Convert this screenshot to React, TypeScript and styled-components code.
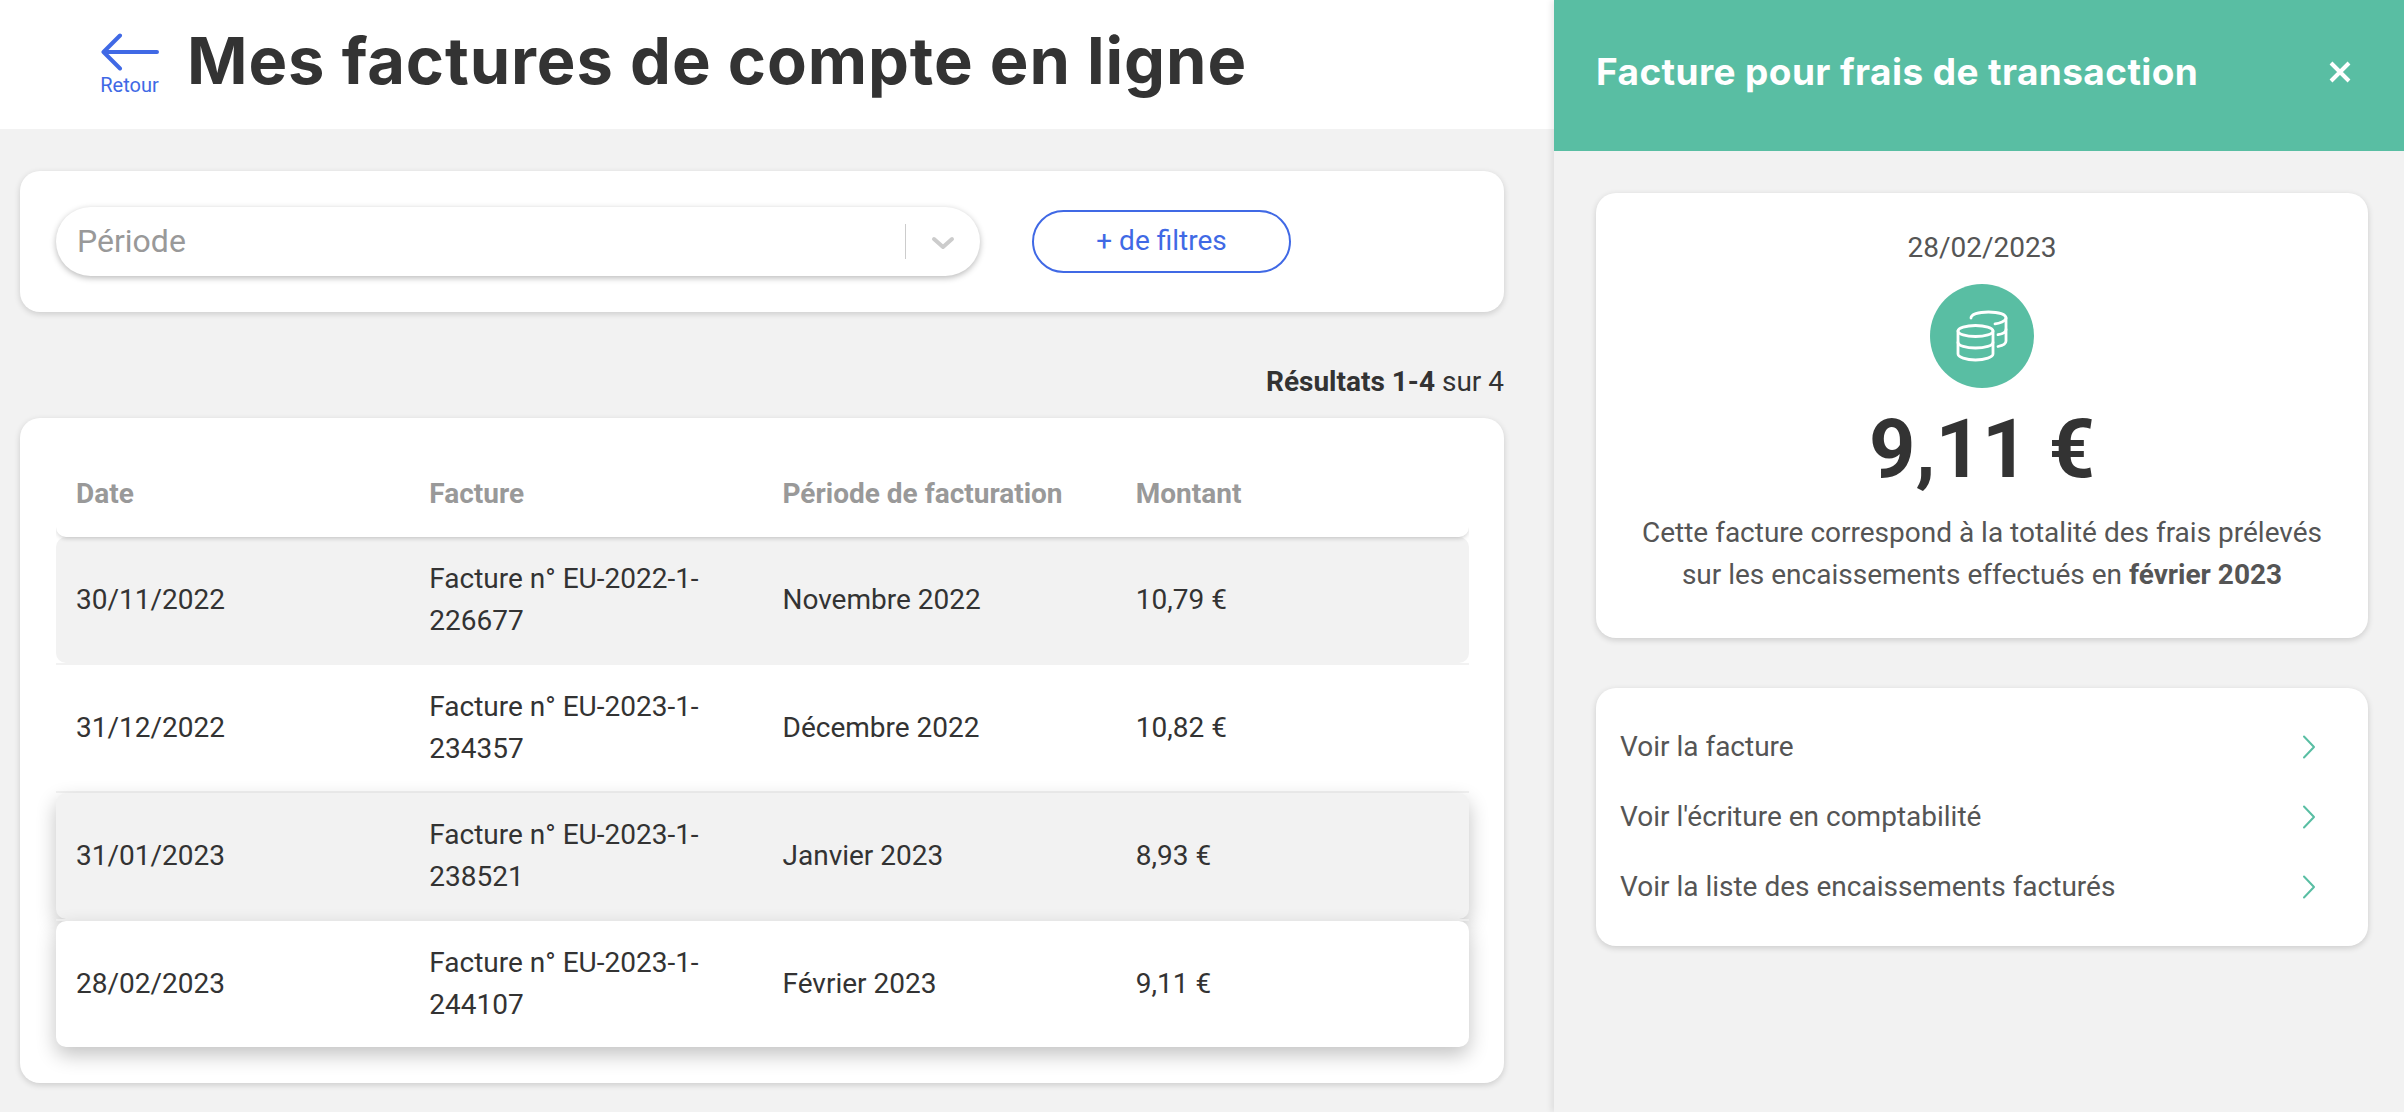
import React from "react";
import styled, { createGlobalStyle } from "styled-components";

const Global = createGlobalStyle`
  html, body { margin: 0; padding: 0; background: #f2f2f2; }
  body { font-family: Roboto, "Liberation Sans", sans-serif; color: #333; }
  * { box-sizing: border-box; }
`;

const Shell = styled.div`
  display: flex;
  width: 2404px;
  height: 1112px;
  overflow: hidden;
  background: #f2f2f2;
`;
const Main = styled.main`
  width: 1554px;
  flex: none;
`;
const TopBar = styled.header`
  height: 129px;
  background: #fff;
  display: flex;
  align-items: flex-start;
  padding: 33px 0 0 100px;
`;
const BackLink = styled.a`
  width: 59px;
  margin-right: 28px;
  display: flex;
  flex-direction: column;
  align-items: center;
  color: #4069e5;
  font-size: 20px;
  line-height: 24px;
`;
const BackIcon = styled.svg`
  display: block;
  width: 59px;
  height: 38px;
  margin-bottom: 2px;
`;
const PageTitle = styled.h1`
  margin: -5px 0 0;
  font-family: Inter, "Noto Sans", sans-serif;
  font-weight: 700;
  font-size: 65px;
  line-height: 66px;
  letter-spacing: 0.9px;
  color: #333;
  white-space: nowrap;
`;
const Card = styled.section`
  background: #fff;
  border-radius: 20px;
  box-shadow: 0 2px 6px rgba(0, 0, 0, 0.16);
`;
const FilterCard = styled(Card)`
  margin: 42px 50px 0 20px;
  height: 141px;
  display: flex;
  align-items: center;
  padding: 0 36px;
`;
const SelectBox = styled.div`
  width: 924px;
  height: 69px;
  border-radius: 35px;
  background: #fff;
  box-shadow: 0 2px 6px rgba(0, 0, 0, 0.28);
  display: flex;
  align-items: center;
  padding-left: 21px;
  padding-bottom: 2px;
  font-size: 32px;
  color: #999;
`;
const Placeholder = styled.span`
  flex: 1;
`;
const Divider = styled.span`
  width: 1px;
  height: 35px;
  margin-top: 2px;
  background: #ccc;
`;
const SelectCaret = styled.svg`
  width: 24px;
  height: 14px;
  margin: 4px 25px 0 25px;
`;
const FilterButton = styled.button`
  margin-left: 52px;
  width: 259px;
  height: 63px;
  border: 2px solid #4069e5;
  border-radius: 32px;
  background: #fff;
  color: #4069e5;
  font: 400 28px Roboto, sans-serif;
  padding: 0 0 2px;
`;
const Results = styled.div`
  margin: 49px 50px 15px 0;
  text-align: right;
  font-size: 28px;
  line-height: 42px;
  color: #333;
`;
const TableCard = styled(Card)`
  margin: 0 50px 0 20px;
  padding: 0 35px 36px 36px;
`;
const HeadRow = styled.div`
  position: relative;
  z-index: 1;
  display: grid;
  grid-template-columns: repeat(4, 1fr);
  height: 119px;
  padding-top: 55px;
  background: #fff;
  border-radius: 0 0 10px 10px;
  box-shadow: 0 2px 5px -1px rgba(0, 0, 0, 0.22);
  clip-path: inset(0 0 -12px 0);
`;
const HeadCell = styled.div`
  padding-left: 20px;
  font-size: 28px;
  line-height: 42px;
  font-weight: 700;
  color: #999;
`;
const Row = styled.div<{ $grey?: boolean; $lifted?: boolean }>`
  position: relative;
  display: grid;
  grid-template-columns: repeat(4, 1fr);
  align-items: center;
  height: 126px;
  border-radius: 10px;
  background: ${(p) => (p.$grey ? "#f2f2f2" : "#fff")};
  box-shadow: ${(p) => (p.$lifted ? "0 8px 20px rgba(0, 0, 0, 0.24)" : "none")};
`;
const RowSeparator = styled.div`
  position: relative;
  height: 2px;
  background: #f2f2f2;
`;
const Cell = styled.div`
  padding: 0 20px;
  font-size: 28px;
  line-height: 42px;
  color: #333;
`;
const Side = styled.aside`
  flex: 1;
  box-shadow: -3px 0 6px rgba(0, 0, 0, 0.08);
  position: relative;
`;
const SideHeader = styled.header`
  height: 151px;
  background: #59bea3;
  display: flex;
  justify-content: space-between;
  align-items: flex-start;
  padding: 46px 52px 0 42px;
  color: #fff;
`;
const SideTitle = styled.h2`
  margin: 0;
  font-family: Inter, "Noto Sans", sans-serif;
  font-weight: 700;
  font-size: 37px;
  line-height: 52px;
  letter-spacing: 0.4px;
  white-space: nowrap;
`;
const CloseIcon = styled.svg`
  width: 24px;
  height: 24px;
  margin-top: 14px;
`;
const SideCard = styled(Card)`
  margin: 42px 36px 0 42px;
`;
const SummaryCard = styled(SideCard)`
  height: 445px;
  padding-top: 34px;
  display: flex;
  flex-direction: column;
  align-items: center;
  text-align: center;
  font-size: 28px;
  line-height: 42px;
  color: #555;
`;
const CoinBadge = styled.div`
  width: 104px;
  height: 104px;
  margin-top: 15px;
  border-radius: 50%;
  background: #59bea3;
`;
const CoinIcon = styled.svg`
  display: block;
  width: 104px;
  height: 104px;
`;
const Amount = styled.div`
  font-size: 81px;
  line-height: 124px;
  font-weight: 700;
  color: #333;
`;
const LinksCard = styled(SideCard)`
  margin-top: 50px;
  padding: 24px 52px 24px 24px;
`;
const LinkRow = styled.a`
  display: flex;
  justify-content: space-between;
  align-items: center;
  height: 70px;
  font-size: 28px;
  line-height: 42px;
  color: #555;
`;
const LinkText = styled.span`
  margin-top: -1px;
`;
const Chevron = styled.svg`
  width: 14px;
  height: 24px;
`;

const rows = [
  { date: "30/11/2022", no: "Facture n° EU-2022-1-226677", period: "Novembre 2022", amount: "10,79 €", grey: true },
  { date: "31/12/2022", no: "Facture n° EU-2023-1-234357", period: "Décembre 2022", amount: "10,82 €" },
  { date: "31/01/2023", no: "Facture n° EU-2023-1-238521", period: "Janvier 2023", amount: "8,93 €", grey: true, lifted: true },
  { date: "28/02/2023", no: "Facture n° EU-2023-1-244107", period: "Février 2023", amount: "9,11 €", lifted: true },
];
const links = ["Voir la facture", "Voir l'écriture en comptabilité", "Voir la liste des encaissements facturés"];

export default function App() {
  return (
    <Shell>
      <Global />
      <Main>
        <TopBar>
          <BackLink>
            <BackIcon viewBox="0 0 59 38" fill="none" stroke="#4069e5" strokeWidth="4" strokeLinecap="round" strokeLinejoin="round">
              <path d="M57 19H4M20 2.5 3.5 19 20 35.5" />
            </BackIcon>
            Retour
          </BackLink>
          <PageTitle>Mes factures de compte en ligne</PageTitle>
        </TopBar>
        <FilterCard>
          <SelectBox>
            <Placeholder>Période</Placeholder>
            <Divider />
            <SelectCaret viewBox="0 0 24 14" fill="none" stroke="#ccc" strokeWidth="4" strokeLinecap="round" strokeLinejoin="round">
              <path d="M3 3l9 8 9-8" />
            </SelectCaret>
          </SelectBox>
          <FilterButton>+ de filtres</FilterButton>
        </FilterCard>
        <Results>
          <b>Résultats 1-4</b> sur 4
        </Results>
        <TableCard>
          <HeadRow>
            <HeadCell>Date</HeadCell>
            <HeadCell>Facture</HeadCell>
            <HeadCell>Période de facturation</HeadCell>
            <HeadCell>Montant</HeadCell>
          </HeadRow>
          {rows.map((r, i) => (
            <React.Fragment key={r.date}>
              {i > 0 && <RowSeparator />}
              <Row $grey={r.grey} $lifted={r.lifted}>
                <Cell>{r.date}</Cell>
                <Cell>{r.no}</Cell>
                <Cell>{r.period}</Cell>
                <Cell>{r.amount}</Cell>
              </Row>
            </React.Fragment>
          ))}
        </TableCard>
      </Main>
      <Side>
        <SideHeader>
          <SideTitle>Facture pour frais de transaction</SideTitle>
          <CloseIcon viewBox="0 0 24 24" fill="none" stroke="#fff" strokeWidth="4" strokeLinecap="butt">
            <path d="M3 3l18 18M21 3 3 21" />
          </CloseIcon>
        </SideHeader>
        <SummaryCard>
          <div>28/02/2023</div>
          <CoinBadge>
            <CoinIcon viewBox="0 0 104 104" fill="none" stroke="#fff" strokeWidth="2.8" strokeLinecap="round" strokeLinejoin="round">
              <ellipse cx="45.5" cy="47" rx="17.5" ry="5.5" />
              <path d="M28 47v23c0 3 8 6 17.5 6S63 73 63 70V47" />
              <path d="M28 58.5c0 3 8 5.5 17.5 5.5S63 61.5 63 58.5" />
              <path d="M41 34c0-3.500 7-6 17.500-6S76 30.500 76 34c0 3-7 5.500-11 5.800" />
              <path d="M76 34v23c0 2.500-3 4.500-8 5.500" />
              <path d="M76 45.500c0 2.500-4 4.500-8 5.200" />
            </CoinIcon>
          </CoinBadge>
          <Amount>9,11 €</Amount>
          <div>
            Cette facture correspond à la totalité des frais prélevés
            <br />
            sur les encaissements effectués en <b>février 2023</b>
          </div>
        </SummaryCard>
        <LinksCard>
          {links.map((l) => (
            <LinkRow key={l}>
              <LinkText>{l}</LinkText>
              <Chevron viewBox="0 0 14 24" fill="none" stroke="#59bea3" strokeWidth="2" strokeLinecap="round" strokeLinejoin="round">
                <path d="M2 1.500 12 12 2 22.500" />
              </Chevron>
            </LinkRow>
          ))}
        </LinksCard>
      </Side>
    </Shell>
  );
}
